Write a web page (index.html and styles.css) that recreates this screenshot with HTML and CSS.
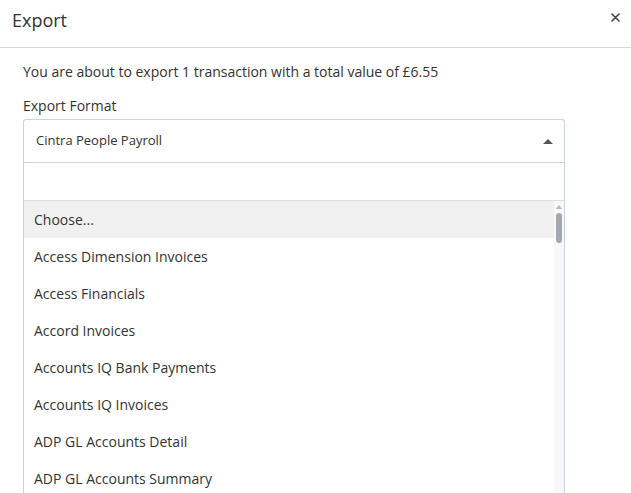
FILE: index.html
```html
<!DOCTYPE html>
<html lang="en">
<head>
    <meta charset="UTF-8">
    <meta name="viewport" content="width=device-width, initial-scale=1.0">
    <title>Export</title>
    <link rel="stylesheet" href="styles.css">
</head>
<body>
    <div class="modal">
        <div class="modal-header">
            <h2 class="modal-title">Export</h2>
            <button class="close-btn" aria-label="Close">
                <svg width="9" height="9" viewBox="0 0 9 9">
                    <path d="M1 1 L8 8 M8 1 L1 8" stroke="#444" stroke-width="1.6" stroke-linecap="round"/>
                </svg>
            </button>
        </div>

        <div class="modal-body">
            <p class="summary">You are about to export 1 transaction with a total value of £6.55</p>
            <label class="field-label">Export Format</label>

            <div class="select open">
                <div class="select-value">
                    <span>Cintra People Payroll</span>
                    <span class="caret"></span>
                </div>
                <div class="select-search">
                    <input type="text" class="search-input">
                </div>
                <div class="select-list">
                    <ul class="options">
                        <li class="option active">Choose...</li>
                        <li class="option">Access Dimension Invoices</li>
                        <li class="option">Access Financials</li>
                        <li class="option">Accord Invoices</li>
                        <li class="option">Accounts IQ Bank Payments</li>
                        <li class="option">Accounts IQ Invoices</li>
                        <li class="option">ADP GL Accounts Detail</li>
                        <li class="option">ADP GL Accounts Summary</li>
                    </ul>
                    <div class="scrollbar">
                        <span class="scroll-up"></span>
                        <span class="scroll-thumb"></span>
                    </div>
                </div>
            </div>
        </div>
    </div>
</body>
</html>
```

FILE: styles.css
```css
* {
    margin: 0;
    padding: 0;
    box-sizing: border-box;
}

body {
    font-family: 'Open Sans', 'Liberation Sans', sans-serif;
    background: #fff;
    color: #333;
    overflow: hidden;
}

.modal {
    width: 631px;
}

.modal-header {
    height: 48px;
    padding: 8px 12px 0;
    border-bottom: 1px solid #d3d8df;
    display: flex;
    justify-content: space-between;
    align-items: flex-start;
}

.modal-title {
    font-size: 18px;
    font-weight: normal;
    line-height: 24px;
    color: #333;
}

.close-btn {
    background: none;
    border: none;
    width: 14px;
    height: 14px;
    margin-top: 2px;
    margin-right: -3px;
    display: flex;
    align-items: center;
    justify-content: center;
    cursor: pointer;
}

.modal-body {
    padding: 14px 23px 0;
}

.summary {
    font-size: 14px;
    line-height: 20px;
}

.field-label {
    display: block;
    font-size: 14px;
    line-height: 20px;
    margin-top: 14px;
    margin-bottom: 3px;
}

.select {
    width: 542px;
    border: 1px solid #ccd3dc;
    border-bottom: none;
    border-radius: 3px 3px 0 0;
}

.select-value {
    height: 43px;
    padding: 0 10px 3px 12px;
    border-bottom: 1px solid #ccd3dc;
    display: flex;
    align-items: center;
    justify-content: space-between;
    font-size: 13px;
    color: #333;
}

.caret {
    width: 0;
    height: 0;
    margin-right: 1px;
    margin-top: 3px;
    border-left: 5px solid transparent;
    border-right: 5px solid transparent;
    border-bottom: 5px solid #555;
}

.select-search {
    height: 38px;
    border-bottom: 1px solid #dcdcdc;
}

.search-input {
    width: 100%;
    height: 100%;
    border: none;
    outline: none;
    padding: 0 10px;
    font-family: inherit;
    font-size: 14px;
}

.select-list {
    display: flex;
    height: 292px;
    overflow: hidden;
}

.options {
    list-style: none;
    flex: 1;
}

.option {
    height: 37px;
    line-height: 37px;
    padding-left: 10px;
    font-size: 14px;
    color: #333;
}

.option.active {
    background: #f0f0f0;
}

.scrollbar {
    width: 10px;
    background: #f8f8f8;
    display: flex;
    flex-direction: column;
    align-items: center;
    padding-top: 4px;
}

.scroll-up {
    width: 0;
    height: 0;
    border-left: 3px solid transparent;
    border-right: 3px solid transparent;
    border-bottom: 4px solid #b5b5b5;
}

.scroll-thumb {
    width: 6px;
    height: 30px;
    margin-top: 4px;
    border-radius: 3px;
    background: #a5a8ae;
}
```
